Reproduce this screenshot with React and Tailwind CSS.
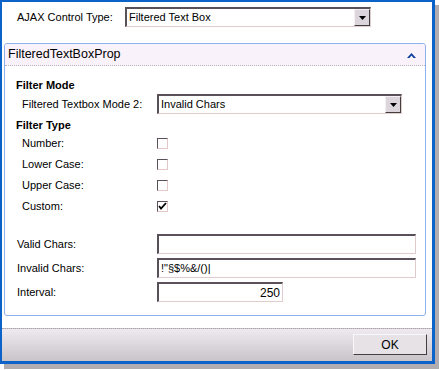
import React from "react";

const font = "font-['Liberation_Sans',Arial,sans-serif]";

function DropBtn() {
  return (
    <div className="w-[16px] h-full bg-[#dcd6dc] border border-t-[#f4f0f4] border-l-[#f4f0f4] border-r-[#404040] border-b-[#404040] flex items-center justify-center">
      <svg width="7" height="4" viewBox="0 0 7 4">
        <path d="M0 0 H7 L3.5 4 Z" fill="#000" />
      </svg>
    </div>
  );
}

function Select({ value, className }) {
  return (
    <div
      className={`flex items-stretch bg-white border-t-2 border-l-2 border-t-[#5a505a] border-l-[#5a505a] border-r border-b border-r-[#e0cccc] border-b-[#e0cccc] ${className}`}
    >
      <div className="flex-1 flex items-center pl-[2px] text-black">{value}</div>
      <div className="py-0 pr-0">
        <DropBtn />
      </div>
    </div>
  );
}

function Checkbox({ checked }) {
  return (
    <div className="w-[11px] h-[11px] bg-white border-t border-l border-t-[#5a505a] border-l-[#5a505a] border-r border-b border-r-[#e4c8c8] border-b-[#e4c8c8] flex items-center justify-center">
      {checked && (
        <svg width="9" height="9" viewBox="0 0 9 9">
          <path d="M1 4 L3 6.5 L8 1" stroke="#000" strokeWidth="1.8" fill="none" />
        </svg>
      )}
    </div>
  );
}

function Input({ value, className, right }) {
  return (
    <div
      className={`h-[20px] bg-white border-t-2 border-l-2 border-t-[#5a505a] border-l-[#5a505a] border-r border-b border-r-[#e0cccc] border-b-[#e0cccc] flex items-center px-[2px] ${right ? "justify-end" : ""} ${className}`}
    >
      {value}
    </div>
  );
}

export default function App() {
  return (
    <div className={`w-[439px] h-[370px] bg-white ${font} text-[11px] text-black`}>
      <div className="w-[435px] h-[364px] border-t-2 border-l-2 border-r-[3px] border-b-[3px] border-[#0b62c8] bg-white flex flex-col shadow-[4px_5px_0_0_#b0acb0]">
        {/* top row */}
        <div className="flex items-center pt-[5px] h-[41px] items-start">
          <div className="flex items-center h-[20px]">
            <div className="w-[123px] pl-[15px]">AJAX Control Type:</div>
            <Select value="Filtered Text Box" className="w-[246px] h-[20px]" />
          </div>
        </div>

        {/* panel */}
        <div className="ml-[2px] w-[422px] h-[273px] border border-[#8fb0f0] rounded-[3px] flex flex-col">
          <div className="h-[22px] bg-[#faf2fb] border-b border-dotted border-b-[#b8b4b8] flex items-center justify-between pl-[3px] pr-[9px] rounded-t-[3px]">
            <span className="text-[12.5px]">FilteredTextBoxProp</span>
            <svg width="9" height="6" viewBox="0 0 9 6">
              <path d="M0 6 L4.5 1 L9 6 L6.5 6 L4.5 3.5 L2.5 6 Z" fill="#0a3c9c" />
            </svg>
          </div>
          <div className="flex flex-col pt-[11px] pl-[11px]">
            <div className="h-[16px] flex items-center font-bold">Filter Mode</div>
            <div className="mt-[1px] h-[20px] flex items-center">
              <div className="w-[141px] pl-[6px]">Filtered Textbox Mode 2:</div>
              <Select value="Invalid Chars" className="w-[245px] h-[20px]" />
            </div>
            <div className="mt-[3px] h-[16px] flex items-center font-bold">Filter Type</div>
            {[
              ["Number:", false],
              ["Lower Case:", false],
              ["Upper Case:", false],
              ["Custom:", true],
            ].map(([l, c]) => (
              <div key={l} className="h-[21px] flex items-center">
                <div className="w-[141px] pl-[6px]">{l}</div>
                <Checkbox checked={c} />
              </div>
            ))}
            <div className="mt-[17px] flex flex-col gap-[4px]">
              <div className="flex items-center">
                <div className="w-[141px] pl-[1px]">Valid Chars:</div>
                <Input value="" className="w-[259px]" />
              </div>
              <div className="flex items-center">
                <div className="w-[141px] pl-[1px]">Invalid Chars:</div>
                <Input value={'!"§$%&/()|'} className="w-[259px]" />
              </div>
              <div className="flex items-center">
                <div className="w-[141px] pl-[1px]">Interval:</div>
                <Input value="250" right className="w-[126px] text-[12px]" />
              </div>
            </div>
          </div>
        </div>

        <div className="h-[12px]" />

        {/* footer */}
        <div className="flex-1 border-t border-dotted border-t-[#a8a4a8] bg-gradient-to-b from-[#f0eaf0] to-[#c8c4c8] flex justify-end items-start pt-[5px] pr-[5px]">
          <div className="w-[74px] h-[21px] bg-[#e6e2e6] border border-t-[#f8f8f8] border-l-[#f8f8f8] border-r-[#404040] border-b-[#404040] flex items-center justify-center text-[12px]">
            OK
          </div>
        </div>
      </div>
    </div>
  );
}
